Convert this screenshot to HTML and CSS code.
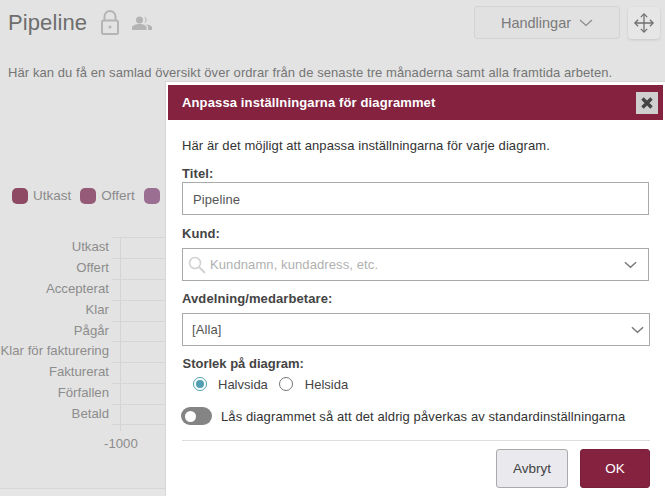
FILE: index.html
```html
<!DOCTYPE html>
<html lang="sv">
<head>
<meta charset="utf-8">
<title>Pipeline</title>
<link rel="stylesheet" href="styles.css">
</head>
<body>
<main class="page">
  <header class="top">
    <h1 class="title">Pipeline</h1>
    <svg class="lock" width="20" height="26" viewBox="0 0 20 26" fill="none" stroke="#b4b4b4" stroke-width="2"><path d="M4.500 11V6.500a5.500 5.500 0 0 1 11 0V11"/><rect x="2" y="10.500" width="16" height="13.500" rx="1.500"/><circle cx="10" cy="17" r="1.500" fill="#b4b4b4" stroke="none"/></svg>
    <svg class="people" width="20" height="14" viewBox="0 0 20 14" fill="#b4b4b4"><circle cx="7.500" cy="4" r="3.500"/><path d="M0 14v-2.500C0 9.500 4 8 7.500 8s7 1.500 7 3.500V14z"/><path d="M12 .6a3.500 3.500 0 0 1 0 6.800 4.500 4.500 0 0 0 0-6.800zM13.500 8.200c3 .3 6.500 1.400 6.500 3.300V14h-4v-2.500c0-1.300-1-2.400-2.500-3.300z"/></svg>
    <div class="top-actions">
      <button class="actions-btn" type="button">Handlingar
        <svg width="14" height="8" viewBox="0 0 14 8" fill="none" stroke="#8a8a8a" stroke-width="1.200"><path d="M1 1l6 5.500L13 1"/></svg>
      </button>
      <button class="move-btn" type="button" aria-label="Flytta">
        <svg width="20" height="20" viewBox="0 0 22 22" fill="none" stroke="#6f6f6f" stroke-width="1.400"><path d="M11 1v20M1 11h20"/><path d="M7.500 4.500L11 1l3.500 3.500M7.500 17.500L11 21l3.500-3.500M4.500 7.500L1 11l3.500 3.500M17.500 7.500L21 11l-3.500 3.500"/></svg>
      </button>
    </div>
  </header>
  <p class="intro">Här kan du få en samlad översikt över ordrar från de senaste tre månaderna samt alla framtida arbeten.</p>
  <ul class="legend">
    <li><span class="swatch s1"></span>Utkast</li>
    <li><span class="swatch s2"></span>Offert</li>
    <li><span class="swatch s3"></span></li>
  </ul>
  <div class="chart">
    <div class="row"><span>Utkast</span></div>
    <div class="row"><span>Offert</span></div>
    <div class="row"><span>Accepterat</span></div>
    <div class="row"><span>Klar</span></div>
    <div class="row"><span>Pågår</span></div>
    <div class="row"><span>Klar för fakturering</span></div>
    <div class="row"><span>Fakturerat</span></div>
    <div class="row"><span>Förfallen</span></div>
    <div class="row"><span>Betald</span></div>
    <div class="tick">-1000</div>
  </div>
</main>
<div class="page-foot"></div>

<section class="modal" role="dialog" aria-labelledby="modal-title">
  <div class="modal-head">
    <h2 id="modal-title">Anpassa inställningarna för diagrammet</h2>
    <button class="close" type="button" aria-label="Stäng">
      <svg width="12" height="12" viewBox="0 0 12 12" stroke="#444" stroke-width="3.400"><path d="M1.500 1.500l9 9M10.500 1.500l-9 9"/></svg>
    </button>
  </div>
  <div class="modal-body">
    <p class="lead">Här är det möjligt att anpassa inställningarna för varje diagram.</p>
    <label class="field-label">Titel:</label>
    <div class="field title-field">Pipeline</div>
    <label class="field-label kund">Kund:</label>
    <div class="field search">
      <svg width="18" height="18" viewBox="0 0 18 18" fill="none" stroke="#d2d2d2" stroke-width="1.600"><circle cx="7" cy="7" r="5.500"/><path d="M11 11l6 6" stroke-width="2"/></svg>
      <span class="placeholder">Kundnamn, kundadress, etc.</span>
      <svg class="chev" width="13" height="8" viewBox="0 0 14 8" fill="none" stroke="#777" stroke-width="1.500"><path d="M1 1l6 5.500L13 1"/></svg>
    </div>
    <label class="field-label avd">Avdelning/medarbetare:</label>
    <div class="field select">
      <span>[Alla]</span>
      <svg class="chev" width="13" height="8" viewBox="0 0 14 8" fill="none" stroke="#777" stroke-width="1.500"><path d="M1 1l6 5.500L13 1"/></svg>
    </div>
    <div class="size-label">Storlek på diagram:</div>
    <div class="radios">
      <span class="radio on"></span><span class="radio-text first">Halvsida</span>
      <span class="radio"></span><span class="radio-text">Helsida</span>
    </div>
    <div class="lock-row">
      <span class="toggle"><span class="knob"></span></span>
      <span>Lås diagrammet så att det aldrig påverkas av standardinställningarna</span>
    </div>
    <div class="modal-foot">
      <button class="btn cancel" type="button">Avbryt</button>
      <button class="btn ok" type="button">OK</button>
    </div>
  </div>
</section>
</body>
</html>
```
FILE: styles.css
```css
* { box-sizing: border-box; }
html, body { margin: 0; height: 496px; overflow: hidden; }
body {
  background: #e3e3e3;
  font-family: "Liberation Sans", Arial, sans-serif;
  color: #333;
  position: relative;
}
.page { height: 489px; border-bottom: 1px solid #d6d6d6; padding: 0 0 0 8px; }
.top { display: flex; align-items: center; height: 45px; }
.title { margin: 0; font-size: 22px; letter-spacing: .1px; font-weight: 400; color: #6e6e6e; line-height: 45px; }
.lock { margin-left: 13px; }
.people { margin-left: 12px; margin-top: 1px; }
.top-actions { margin-left: auto; display: flex; gap: 8px; align-items: center; }
.actions-btn {
  width: 146px; height: 33px; background: #e1e1e1; border: 1px solid #d3d3d3; border-radius: 3px;
  font: 14.500px "Liberation Sans", Arial, sans-serif; color: #7a7a7a;
  display: flex; align-items: center; justify-content: center; gap: 8px;
}
.move-btn {
  width: 32px; height: 32px; margin-right: 5px; background: #e6e6e6; border: 0; border-radius: 4px;
  box-shadow: 0 1px 3px rgba(0,0,0,.12); display: flex; align-items: center; justify-content: center; padding: 0;
}
.intro { margin: 20px 0 0; font-size: 13px; letter-spacing: .08px; line-height: 16px; color: #757575; white-space: nowrap; }
.legend { list-style: none; margin: 0; padding: 0 0 0 4px; display: flex; gap: 9px; position: relative; top: 107px; font-size: 13.500px; color: #8b8b8b; line-height: 16px; height: 16px; }
.legend li { display: flex; align-items: center; gap: 5px; }
.swatch { width: 16px; height: 16px; border-radius: 5px; }
.s1 { background: #8e4a62; }
.s2 { background: #955a78; }
.s3 { background: #9a6f91; }
.chart { position: relative; top: 140px; margin-left: -8px; width: 166px; font-size: 13.200px; color: #8c8c8c; }
.row { height: 20.900px; border-top: 1px solid #d6d6d6; margin-left: 112px; position: relative; }
.row span { position: absolute; right: 57px; top: 0; line-height: 17px; white-space: nowrap; }
.chart::before { content: ""; position: absolute; left: 120px; top: 0; height: 194px; width: 1px; background: #d4d4d4; }
.chart::after { content: ""; position: absolute; left: 112px; right: 0; top: 186.500px; height: 1px; background: #d6d6d6; }
.tick { position: absolute; left: 104px; top: 198px; line-height: 17px; }
.page-foot { height: 7px; background: #e6e6e6; }

.modal {
  position: absolute; left: 165px; top: 81px; width: 500px; height: 415px;
  background: #fff; border: 1px solid #d6d6d6; border-right: 0; border-bottom: 0; padding: 3px 2px 0 2px;
}
.modal-head {
  height: 35px; background: #842240; display: flex; align-items: center; justify-content: space-between; padding: 0 5px 0 14px;
}
.modal-head h2 { margin: 0; font-size: 13px; letter-spacing: .13px; font-weight: 700; color: #fff; }
.close { width: 22px; height: 22px; background: #cfcfcf; border: 0; padding: 0; display: flex; align-items: center; justify-content: center; }
.modal-body { padding: 18px 14px 0 14px; }
.lead { margin: 0; font-size: 13px; letter-spacing: .09px; line-height: 16px; color: #333; }
.field-label { display: block; font-size: 13px; letter-spacing: .1px; font-weight: 700; line-height: 16px; color: #444; margin-top: 12px; }
.field { border: 1px solid #aaa; height: 33px; font-size: 13px; letter-spacing: .1px; color: #555; display: flex; align-items: center; background: #fff; }
.title-field { padding: 1px 0 0 10px; width: 467px; }
.field-label.kund { margin-top: 11px; margin-bottom: 6px; }
.search { padding-left: 5px; width: 467px; gap: 4px; }
.placeholder { color: #b0b0b0; font-size: 13px; letter-spacing: .1px; }
.chev { margin-left: auto; margin-right: 11px; }
.field-label.avd { margin-top: 10px; margin-bottom: 6px; }
.select { padding-left: 9px; width: 468px; }
.select .chev { margin-right: 5px; }
.size-label { font-size: 13px; font-weight: 700; color: #444; line-height: 16px; margin: 10px 0 0 .5px; }
.radios { display: flex; align-items: center; margin: 4px 0 0 11px; font-size: 13px; color: #444; height: 16px; }
.radio { width: 14px; height: 14px; border: 1px solid #777; border-radius: 50%; background: #fff; position: relative; flex: none; }
.radio.on { border-color: #4f9fb0; }
.radio.on::after { content: ""; position: absolute; inset: 2px; border-radius: 50%; background: #4f9fb0; }
.radio-text { margin-left: 12px; }
.radio-text.first { margin-left: 11px; margin-right: 11px; }
.lock-row { display: flex; align-items: center; gap: 9px; margin: 14px 0 0 -1px; height: 20px; font-size: 13px; letter-spacing: .1px; color: #333; }
.toggle { width: 31px; height: 18px; border-radius: 9px; background: #848484; position: relative; flex: none; }
.knob { position: absolute; left: 4px; top: 3.500px; width: 11px; height: 11px; border-radius: 50%; background: #fff; }
.modal-foot { border-top: 1px solid #ddd; margin-top: 14px; width: 468px; padding-top: 8px; display: flex; justify-content: flex-end; gap: 12px; }
.btn { height: 39px; border-radius: 3px; font: 13.500px "Liberation Sans", Arial, sans-serif; padding: 0; }
.cancel { width: 72px; background: #e9e9ee; border: 1px solid #aaa; color: #444; }
.ok { width: 70px; background: #842240; border: 1px solid #7a1f3b; color: #fff; }
```
